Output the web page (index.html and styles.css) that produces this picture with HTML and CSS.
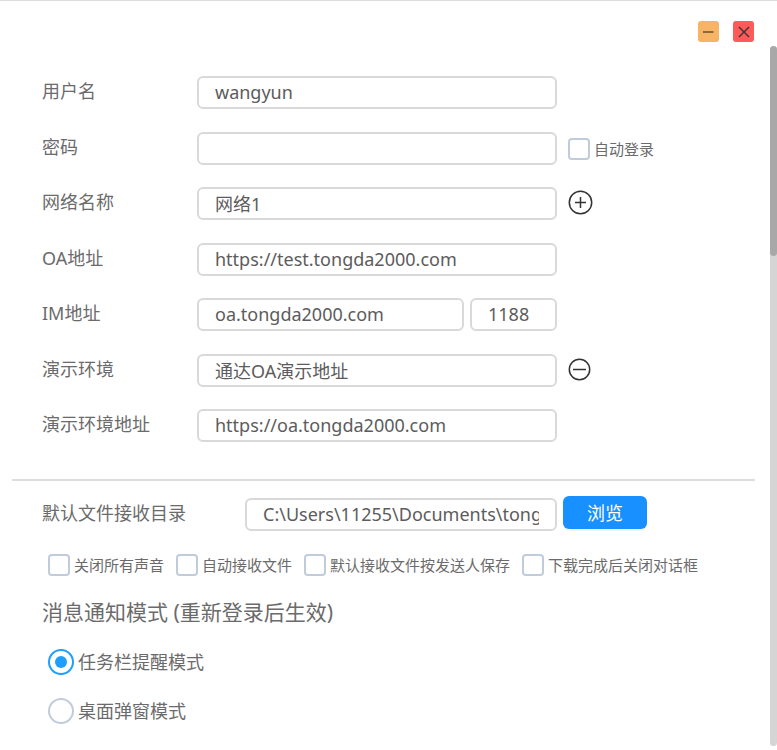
FILE: index.html
```
<!DOCTYPE html>
<html lang="zh-CN">
<head>
  <meta charset="UTF-8" />
  <meta name="viewport" content="width=device-width, initial-scale=1" />
  <title>设置</title>
  <link rel="stylesheet" href="styles.css">
</head>
<body>
  <div class="window">
    <div class="title-bar">
      <button type="button" class="win-btn minimize" aria-label="最小化">
        <svg width="21" height="21" viewBox="0 0 21 21"><path d="M5 11H15.5" /></svg>
      </button>
      <button type="button" class="win-btn close" aria-label="关闭">
        <svg width="21" height="21" viewBox="0 0 21 21"><path d="M6 6L16 16M16 6L6 16" /></svg>
      </button>
    </div>

    <div class="body">
      <form class="settings">
        <div class="network">
          <div class="form-row">
            <label class="name" for="username">用户名</label>
            <div class="field"><input type="text" id="username" value="wangyun" /></div>
          </div>

          <div class="form-row">
            <label class="name" for="password">密码</label>
            <div class="field"><input type="password" id="password" /></div>
            <label class="check"><input type="checkbox" />自动登录</label>
          </div>

          <div class="form-row">
            <label class="name" for="netName">网络名称</label>
            <div class="field"><input type="text" id="netName" value="网络1" /></div>
            <button type="button" class="icon-btn" aria-label="添加">
              <svg width="25" height="25" viewBox="0 0 25 25">
                <circle cx="12.5" cy="12.5" r="11.2" />
                <path d="M7 12.5H18M12.5 7V18" />
              </svg>
            </button>
          </div>

          <div class="form-row">
            <label class="name" for="oaUrl">OA地址</label>
            <div class="field"><input type="text" id="oaUrl" value="https://test.tongda2000.com" /></div>
          </div>

          <div class="form-row">
            <label class="name" for="imHost">IM地址</label>
            <div class="field">
              <input type="text" id="imHost" value="oa.tongda2000.com" />
              <input type="text" class="port" value="1188" aria-label="端口" />
            </div>
          </div>

          <div class="form-row">
            <label class="name" for="demoName">演示环境</label>
            <div class="field"><input type="text" id="demoName" value="通达OA演示地址" /></div>
            <button type="button" class="icon-btn" aria-label="删除">
              <svg width="23" height="23" viewBox="0 0 23 23">
                <circle cx="11.5" cy="11.5" r="10.2" />
                <path d="M5 11.5H18" />
              </svg>
            </button>
          </div>

          <div class="form-row">
            <label class="name" for="demoUrl">演示环境地址</label>
            <div class="field"><input type="text" id="demoUrl" value="https://oa.tongda2000.com" /></div>
          </div>
        </div>

        <hr />

        <div class="form-row directory">
          <label class="name" for="saveDir">默认文件接收目录</label>
          <div class="field"><input type="text" id="saveDir" value="C:\Users\11255\Documents\tongda" /></div>
          <button type="button" class="browse">浏览</button>
        </div>

        <div class="checks">
          <label class="check"><input type="checkbox" />关闭所有声音</label>
          <label class="check"><input type="checkbox" />自动接收文件</label>
          <label class="check"><input type="checkbox" />默认接收文件按发送人保存</label>
          <label class="check"><input type="checkbox" />下载完成后关闭对话框</label>
        </div>

        <fieldset class="notify">
          <legend>消息通知模式 (重新登录后生效)</legend>
          <label class="radio"><input type="radio" name="notify" checked />任务栏提醒模式</label>
          <label class="radio"><input type="radio" name="notify" />桌面弹窗模式</label>
        </fieldset>
      </form>

      <div class="scrollbar"><div class="thumb"></div></div>
    </div>
  </div>
</body>
</html>
```
FILE: styles.css
```
* {
  box-sizing: border-box;
}

body {
  margin: 0;
  background: #fff;
  color: #6b6b6b;
  font-family: "Noto Sans", "Noto Sans CJK SC", sans-serif;
  font-size: 18px;
}

.window {
  display: flex;
  flex-direction: column;
  min-height: 100vh;
  border-top: 1px solid #ddd;
  padding-bottom: 4px;
}

.title-bar {
  display: flex;
  justify-content: flex-end;
  gap: 14px;
  height: 45px;
  padding: 20px 23px 0 0;
}

button,
input {
  margin: 0;
  font: inherit;
}

button {
  padding: 0;
  border: none;
  cursor: pointer;
}

svg {
  display: block;
  fill: none;
  stroke: #333;
}

.win-btn {
  width: 21px;
  height: 21px;
  border-radius: 3px;
}

.minimize {
  background: #f6b464;
}

.minimize svg {
  stroke: #8b693e;
  stroke-width: 2;
}

.close {
  background: #ff5a5a;
}

.close svg {
  stroke-width: 1.4;
}

.body {
  display: flex;
  flex: 1;
}

.settings {
  flex: 1;
  min-width: 0;
  padding: 30px 15px 0 12px;
}

.network {
  padding: 0 0 37px 30px;
}

.form-row {
  display: flex;
  align-items: center;
  height: 33px;
  margin-bottom: 22px;
}

.form-row:nth-child(odd) {
  margin-bottom: 23px;
}

.form-row:last-child {
  margin-bottom: 0;
}

.name {
  width: 155px;
  padding-bottom: 4px;
  line-height: 28px;
}

.field {
  display: flex;
  flex: 0 1 360px;
  gap: 6px;
  min-width: 0;
}

.field input {
  flex: 1;
  min-width: 0;
  height: 33px;
  padding: 0 16px 1px;
  border: 2px solid #d9d9d9;
  border-radius: 6px;
  background: #fff;
  color: #5c5c5c;
  outline: none;
}

.field .port {
  flex: 0 0 87px;
}

.form-row .check,
.icon-btn {
  margin-left: 11px;
}

.icon-btn {
  padding-bottom: 2px;
  background: none;
}

.icon-btn svg {
  stroke-width: 1.5;
}

.check {
  display: flex;
  align-items: center;
  gap: 4px;
  font-size: 15px;
  line-height: 22px;
  white-space: nowrap;
}

.check input {
  appearance: none;
  width: 22px;
  height: 22px;
  border: 2px solid #c0ccdc;
  border-radius: 4px;
}

.check input:checked {
  background: #1e9fff;
  border-color: #1e9fff;
}

hr {
  height: 2px;
  margin: 0;
  border: none;
  background: #ddd;
}

.form-row.directory {
  margin: 17px 0 23px 30px;
}

.directory .name {
  width: 203px;
}

.directory .field {
  flex-basis: 312px;
}

.browse {
  width: 84px;
  height: 33px;
  margin: 0 0 4px 6px;
  padding-bottom: 2px;
  border-radius: 6px;
  background: #1890ff;
  box-shadow: 0 2px 0 #f5f5f5;
  color: #fff;
}

.checks {
  display: flex;
  flex-wrap: wrap;
  gap: 12px;
  padding-left: 36px;
}

.notify {
  margin: 20px 0 0;
  padding: 0 0 0 36px;
  border: none;
}

.notify legend {
  margin-left: -6px;
  padding: 0;
  font-size: 21px;
  line-height: 32px;
}

.radio {
  display: flex;
  align-items: center;
  gap: 4px;
  margin-top: 19px;
  line-height: 30px;
}

.radio input {
  appearance: none;
  display: grid;
  place-items: center;
  width: 26px;
  height: 26px;
  border: 2px solid #c0ccdc;
  border-radius: 50%;
}

.radio input:checked {
  border-color: #1e9fff;
}

.radio input:checked::before {
  content: "";
  width: 12px;
  height: 12px;
  border-radius: 50%;
  background: #1e9fff;
}

.scrollbar {
  width: 7px;
  border-radius: 4px;
  background: #d5d5d5;
}

.thumb {
  height: 30%;
  border-radius: 4px;
  background: #a8a8a8;
}
```
